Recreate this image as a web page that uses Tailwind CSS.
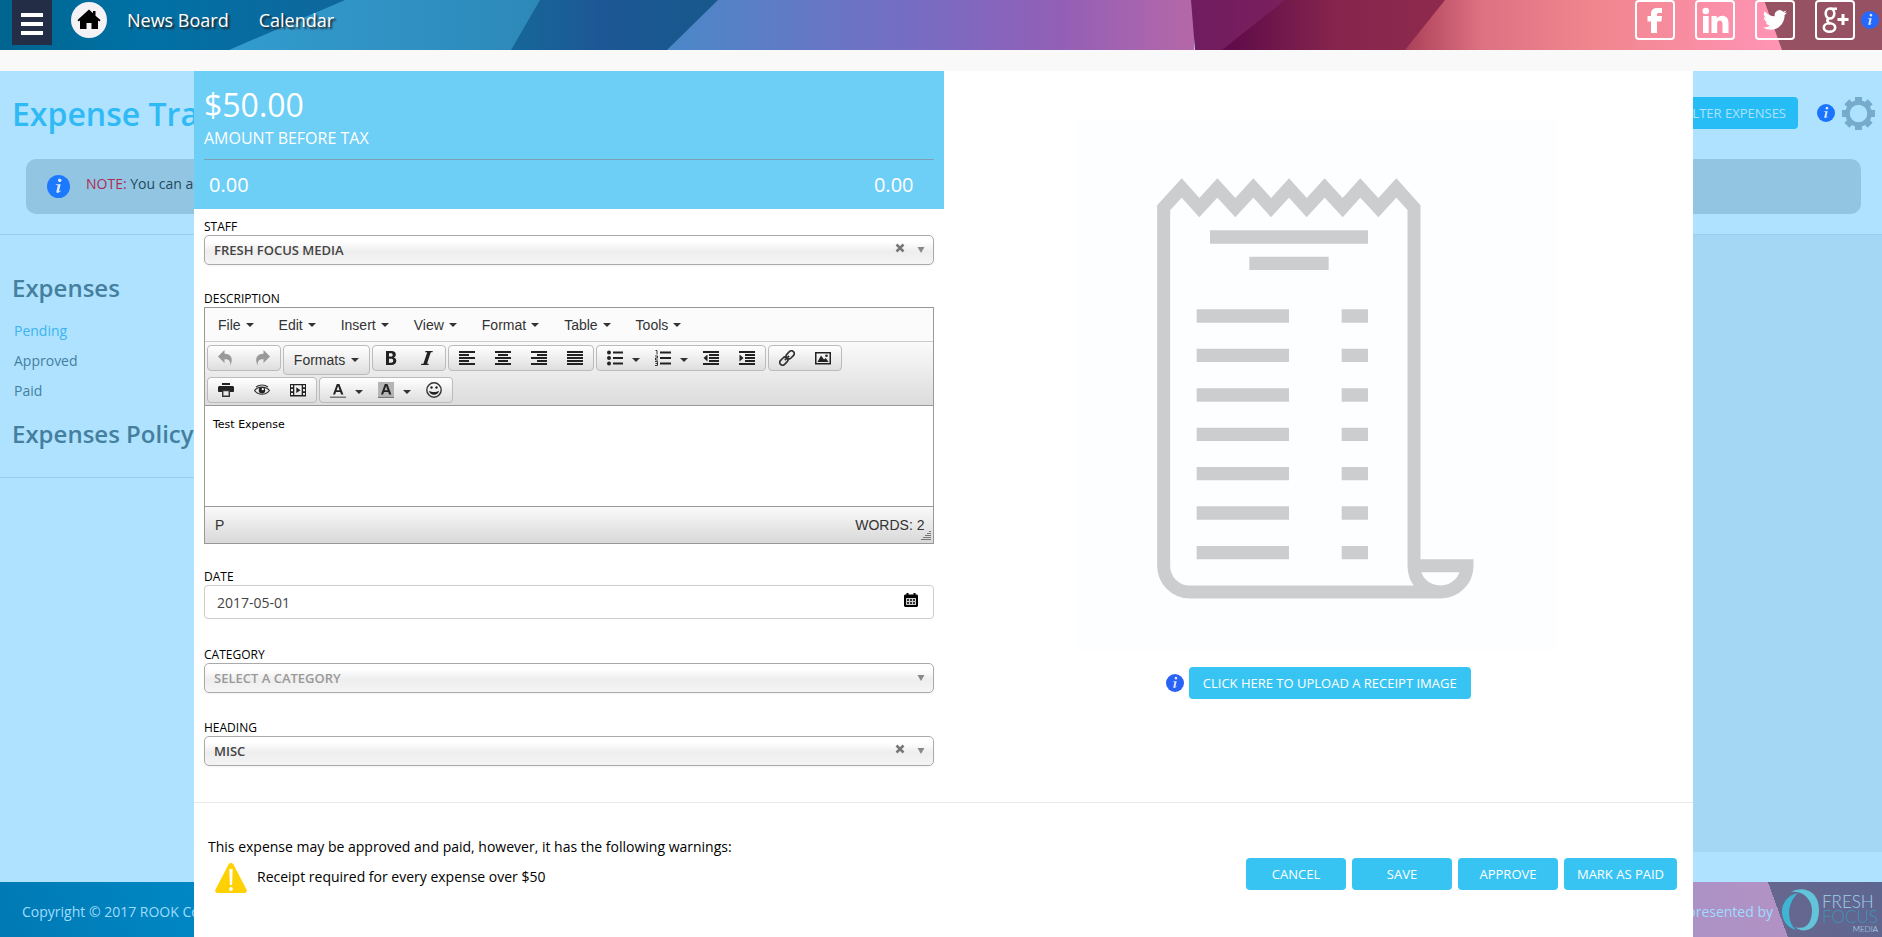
<!DOCTYPE html>
<html lang="en">
<head>
<meta charset="utf-8">
<title>Expense Tracker</title>
<script src="https://cdn.jsdelivr.net/npm/@tailwindcss/browser@4"></script>
</head>
<body class="font-['Open_Sans',sans-serif] text-sm text-black">

<svg class="hidden" aria-hidden="true">
  <symbol id="caret" viewBox="0 0 8 4"><path d="M0 0h8L4 4z"/></symbol>
  <symbol id="info" viewBox="0 0 20 20"><circle cx="10" cy="10" r="10"/><path fill="#fff" fill-opacity=".85" d="M9.6 4.2a1.5 1.5 0 1 1 2.4 1.6 1.5 1.5 0 0 1-2.4-1.6zM7.6 8h4.3l-1.4 5.6c-.2.8.4.6 1.3-.1l.3.5c-1.5 1.6-4.4 2.600-3.900.2l1.100-4.600c.2-.7-.2-.8-1.700-.9z"/></symbol>
  <symbol id="undo" viewBox="0 0 16 16"><path d="M6.500 0v3.800C12.500 3.800 16 8 12.300 15.500 12.600 10.500 10.500 9.200 6.500 9.300V13L0 6.500z"/></symbol>
  <symbol id="redo" viewBox="0 0 16 16"><path d="M9.500 0v3.800C3.500 3.800 0 8 3.700 15.500 3.400 10.500 5.500 9.200 9.500 9.300V13L16 6.500z"/></symbol>
  <symbol id="bold" viewBox="0 0 16 16"><path fill-rule="evenodd" d="M3 1h5.500c3 0 4.300 1.400 4.300 3.500 0 1.500-.8 2.500-2 3 1.600.4 2.500 1.600 2.500 3.300 0 2.600-1.800 4.200-4.800 4.200H3zM6 3.300v3.300h1.800c1.300 0 1.900-.6 1.900-1.700s-.6-1.600-1.900-1.600zM6 8.800v3.900h2.100c1.400 0 2.100-.7 2.100-2s-.7-1.900-2.100-1.900z"/></symbol>
  <symbol id="italic" viewBox="0 0 16 16"><path d="M6.500 1h7.300l-.3 1.200h-1.700L8 13.800h1.800L9.400 15H2l.4-1.200h2L8.200 2.200H6.100z"/></symbol>
  <symbol id="left" viewBox="0 0 16 16"><path d="M0 1h16v2H0zM0 4h10v2H0zM0 7h16v2H0zM0 10h10v2H0zM0 13h16v2H0z"/></symbol>
  <symbol id="center" viewBox="0 0 16 16"><path d="M0 1h16v2H0zM3 4h10v2H3zM0 7h16v2H0zM3 10h10v2H3zM0 13h16v2H0z"/></symbol>
  <symbol id="right" viewBox="0 0 16 16"><path d="M0 1h16v2H0zM6 4h10v2H6zM0 7h16v2H0zM6 10h10v2H6zM0 13h16v2H0z"/></symbol>
  <symbol id="justify" viewBox="0 0 16 16"><path d="M0 1h16v2H0zM0 4h16v2H0zM0 7h16v2H0zM0 10h16v2H0zM0 13h16v2H0z"/></symbol>
  <symbol id="bullets" viewBox="0 0 16 16"><circle cx="2" cy="2.500" r="2"/><circle cx="2" cy="8" r="2"/><circle cx="2" cy="13.500" r="2"/><path d="M6 1.500h10v2H6zM6 7h10v2H6zM6 12.500h10v2H6z"/></symbol>
  <symbol id="numbers" viewBox="0 0 16 16"><path d="M5 1.500h11v2H5zM5 7h11v2H5zM5 12.500h11v2H5z"/><path fill="none" stroke="#333" d="M.5.500H2V4.500M0 6h2.500v2H.5v2H3M0 11.500h2.500v4H0M.5 13.500h2"/></symbol>
  <symbol id="outdent" viewBox="0 0 16 16"><path d="M0 1h16v2H0zM6 4h10v2H6zM6 7h10v2H6zM6 10h10v2H6zM0 13h16v2H0zM4.500 4.500v7L.5 8z"/></symbol>
  <symbol id="indent" viewBox="0 0 16 16"><path d="M0 1h16v2H0zM6 4h10v2H6zM6 7h10v2H6zM6 10h10v2H6zM0 13h16v2H0zM.5 4.500v7l4-3.500z"/></symbol>
  <symbol id="link" viewBox="0 0 16 16"><g fill="none" stroke="#333" stroke-width="1.700" transform="rotate(-45 8 8)"><rect x="-1" y="5.200" width="9" height="5.600" rx="2.800"/><rect x="8" y="5.200" width="9" height="5.600" rx="2.800"/><path d="M5 8h6"/></g></symbol>
  <symbol id="image" viewBox="0 0 16 16"><path fill-rule="evenodd" d="M0 2h16v12.500H0zM1.500 3.500V13h13V3.500z"/><path d="M2.500 12l3.500-6.500 3 4 1.800-1.500 2.700 4z"/><circle cx="11.500" cy="5.800" r="1.300"/></symbol>
  <symbol id="print" viewBox="0 0 16 16"><path d="M4 1h8v2H4zM1 4h14l1 1v4.500l-.8.500H12V8H4v2H.8L0 9.500V5z"/><path fill="none" stroke="#333" stroke-width="1.400" d="M4.700 8.500h6.600v5.800H4.700z"/></symbol>
  <symbol id="eye" viewBox="0 0 16 16"><path fill="none" stroke="#333" stroke-width="1.200" d="M.6 8.500C4 4 12 4 15.400 8.500 12 13.500 4 13.500.6 8.500zM2 5C5.500 2.600 10.500 2.600 14 5"/><circle cx="8" cy="8.300" r="3.200"/><circle cx="8.800" cy="7.200" r="1.100" fill="#fff"/></symbol>
  <symbol id="film" viewBox="0 0 16 16"><path fill-rule="evenodd" d="M0 2h16v12.500H0zM1 3.300v1.900h2V3.300zm0 3.700v2.200h2V7zm0 3.900v2.200h2v-2.200zM13 3.300v1.900h2V3.300zM13 7v2.200h2V7zm0 3.900v2.200h2v-2.200zM4.300 3.300v9.800h7.400V3.300zM6.300 5.300 10.500 8.200 6.300 11z"/></symbol>
  <symbol id="forecolor" viewBox="0 0 16 16"><path fill="#777" d="M0 14.500h16V16H0z"/><path fill-rule="evenodd" d="M6.800 2h2.600l4 10.500h-2.300l-.9-2.500H6l-.9 2.500H3zM6.600 8.200h3L8.100 4.100z"/></symbol>
  <symbol id="backcolor" viewBox="0 0 16 16"><path fill="#b5b5b5" d="M0 0h16v14H0z"/><path fill="#777" d="M0 14.500h16V16H0z"/><path fill-rule="evenodd" d="M6.800 2h2.600l4 10.500h-2.300l-.9-2.500H6l-.9 2.500H3zM6.600 8.200h3L8.100 4.100z"/></symbol>
  <symbol id="smile" viewBox="0 0 16 16"><circle cx="8" cy="8" r="7.200" fill="none" stroke="#333" stroke-width="1.400"/><circle cx="5.500" cy="5.500" r="1.200"/><circle cx="10.500" cy="5.500" r="1.200"/><path d="M3 8.800c2.500 1.700 7.500 1.700 10 0-.6 5.200-9.400 5.200-10 0z"/></symbol>
  <symbol id="cross" viewBox="0 0 10 10"><path d="M1.500 1.500l7 7M8.500 1.500l-7 7" stroke="#777" stroke-width="2.500"/></symbol>
</svg>

<div class="relative flex min-h-screen flex-col overflow-hidden bg-[#aee2ff]">

  <!-- Top navigation -->
  <header class="relative flex h-[50px] items-start overflow-hidden">
    <svg class="absolute inset-0 h-full w-full" viewBox="0 0 1882 50" preserveAspectRatio="none" aria-hidden="true">
      <defs>
        <linearGradient id="g1"><stop offset="0" stop-color="#00658f"/><stop offset=".4" stop-color="#0071a5"/><stop offset="1" stop-color="#10679c"/></linearGradient>
        <linearGradient id="g2"><stop offset="0" stop-color="#329ccf"/><stop offset="1" stop-color="#2d88b8"/></linearGradient>
        <linearGradient id="g3"><stop offset="0" stop-color="#16679a"/><stop offset=".45" stop-color="#1d5795"/><stop offset="1" stop-color="#17588b"/></linearGradient>
        <linearGradient id="g4"><stop offset="0" stop-color="#4a88c8"/><stop offset=".45" stop-color="#756dc4"/><stop offset=".75" stop-color="#935fb6"/><stop offset="1" stop-color="#b568a8"/></linearGradient>
        <linearGradient id="g5"><stop offset="0" stop-color="#6f1c60"/><stop offset="1" stop-color="#7c1f5c"/></linearGradient>
        <linearGradient id="g6"><stop offset="0" stop-color="#5c0a49"/><stop offset=".5" stop-color="#86254d"/><stop offset="1" stop-color="#8f2a4c"/></linearGradient>
        <linearGradient id="g7"><stop offset="0" stop-color="#aa4058"/><stop offset=".2" stop-color="#de7182"/><stop offset=".5" stop-color="#f1868e"/><stop offset="1" stop-color="#ff94b6"/></linearGradient>
      </defs>
      <path fill="url(#g1)" d="M0 0h350v50H0z"/>
      <path fill="url(#g2)" d="M345 0h200v50H229z"/>
      <path fill="url(#g3)" d="M540 0h180v50H511z"/>
      <path fill="url(#g4)" d="M718 0h476v50H667z"/>
      <path fill="url(#g5)" d="M1191 0h98v50h-94z"/>
      <path fill="url(#g6)" d="M1285 0h165v50h-228z"/>
      <path fill="url(#g7)" d="M1445 0h340v50h-380z"/>
      <path fill="#965163" d="M1764 0h118v50h-100z"/>
    </svg>
    <div class="relative flex w-full items-start pl-3">
      <button type="button" aria-label="Menu" class="flex h-[45px] w-10 flex-col items-center justify-center gap-[5px] bg-[#232d45] pt-0.5">
        <span class="h-1 w-[22px] bg-white"></span><span class="h-1 w-[22px] bg-white"></span><span class="h-1 w-[22px] bg-white"></span>
      </button>
      <a href="#" aria-label="Home" class="mt-0.5 ml-[19px] flex size-9 items-center justify-center rounded-full bg-[#f4f2f4]">
        <svg class="size-6" viewBox="0 0 24 24"><path d="M12 1.500l4 3.800V3h2.500v4.700L23.500 12l-1 1.500-1.500-1V21h-6.500v-6h-5v6H3v-8.500l-1.500 1L.5 12z"/></svg>
      </a>
      <nav class="ml-5 flex gap-[30px] text-lg leading-10 text-white [text-shadow:2px_2px_2px_#222]">
        <a href="#">News Board</a><a href="#">Calendar</a>
      </nav>
      <div class="ml-auto flex gap-5">
        <a href="#" aria-label="Facebook" class="size-10 rounded border-2 border-white"><svg viewBox="0 0 36 36" fill="#fff"><path d="M14 31V19.500h-3.500V14H14v-2.500C14 8 16.500 6 20.500 6H25v5h-3c-1.500 0-2 .6-2 1.500V14h5l-.6 5.500H20V31z"/></svg></a>
        <a href="#" aria-label="LinkedIn" class="size-10 rounded border-2 border-white"><svg viewBox="0 0 36 36" fill="#fff"><circle cx="8.800" cy="9" r="3.300"/><path d="M6 14h5.700v17H6zM14.500 14h5.300v2.500c3-4.500 11.700-4 11.700 4V31h-6v-9c0-4.500-5.300-4.500-5.300-.5V31h-5.700z"/></svg></a>
        <a href="#" aria-label="Twitter" class="size-10 rounded border-2 border-white"><svg viewBox="0 0 36 36"><path fill="#fff" transform="translate(6 6)" d="M23.950 4.570a10 10 0 0 1-2.820.77 4.960 4.960 0 0 0 2.160-2.720c-.95.550-2 .95-3.130 1.180a4.920 4.920 0 0 0-8.390 4.480C7.690 8.100 4.070 6.130 1.640 3.160a4.920 4.920 0 0 0 1.520 6.570 4.900 4.900 0 0 1-2.230-.61v.06a4.920 4.920 0 0 0 3.950 4.830 5 5 0 0 1-2.210.080 4.940 4.940 0 0 0 4.600 3.420A9.870 9.870 0 0 1 0 19.540a14 14 0 0 0 7.550 2.210c9.050 0 14-7.500 14-13.980l-.02-.64a9.940 9.940 0 0 0 2.420-2.560z"/></svg></a>
        <a href="#" aria-label="Google Plus" class="size-10 rounded border-2 border-white"><svg viewBox="0 0 36 36"><g fill="none" stroke="#fff" stroke-width="2.600"><ellipse cx="13" cy="11.500" rx="4.300" ry="5"/><ellipse cx="12.500" cy="25.500" rx="5.700" ry="4.300"/><path d="M13.500 6.800H20M12 16.500c-3 2-1.500 3.500 1.500 5"/><path stroke-width="3" d="M20.500 17.500h11M26 12v11"/></g></svg></a>
        <svg class="mt-[11px] -ml-[14px] size-[18px] fill-[#2468ff]" aria-hidden="true"><use href="#info"/></svg>
        <span class="-ml-[17px]"></span>
      </div>
    </div>
  </header>
  <div class="h-[21px] bg-[#faf9fa]"></div>

  <!-- Page behind the dialog -->
  <div class="flex h-[88px] items-center justify-between pr-[7px] pl-3">
    <h1 class="pb-0.5 text-[32px] font-semibold text-[#2fbaf5]">Expense Tracker</h1>
    <div class="flex items-center pb-1">
      <button type="button" class="h-8 rounded bg-[#26bdf7] px-3 text-[13px] text-[#aee2ff]">FILTER EXPENSES</button>
      <svg class="ml-[19px] size-[18px] fill-[#1b74ff]" aria-hidden="true"><use href="#info"/></svg>
      <button type="button" aria-label="Settings" class="ml-[7px]"><svg class="size-[33px]" viewBox="0 0 33 33"><g fill="#76abcb"><path d="M13 0h7v6h-7zM13 27h7v6h-7zM0 13h6v7H0zM27 13h6v7h-6z"/><path transform="rotate(45 16.500 16.500)" d="M13 0h7v6h-7zM13 27h7v6h-7zM0 13h6v7H0zM27 13h6v7h-6z"/></g><circle cx="16.500" cy="16.500" r="11" fill="none" stroke="#76abcb" stroke-width="4.500"/></svg></button>
    </div>
  </div>
  <div class="mr-[21px] mb-5 ml-[26px] flex h-[55px] items-center gap-4 rounded-[10px] bg-[#92c5e1] px-[21px]">
    <svg class="size-[23px] fill-[#1b78ff]" aria-hidden="true"><use href="#info"/></svg>
    <p class="pb-1.5 text-[#1c4a60]"><span class="text-[#b02a52]">NOTE:</span> You can add expenses here</p>
  </div>
  <div class="flex h-[618px] border-t border-[#96cdf0]">
    <aside class="w-[300px] shrink-0 px-3 text-[#457f9e]">
      <h2 class="mt-[35px] text-2xl leading-9 font-semibold whitespace-nowrap">Expenses</h2>
      <ul class="mt-[10px] pl-0.5 leading-[30px]">
        <li><a href="#" class="text-[#3db4ee]">Pending</a></li>
        <li><a href="#">Approved</a></li>
        <li><a href="#">Paid</a></li>
      </ul>
      <h2 class="mt-[10px] text-2xl leading-9 font-semibold whitespace-nowrap">Expenses Policy</h2>
      <hr class="-mx-3 mt-[25px] border-[#96cdf0]">
    </aside>
    <main class="flex-1 bg-[#a4d7f3]"></main>
  </div>
  <footer class="mt-auto flex h-[55px] items-center justify-between bg-[linear-gradient(70deg,#0079b4_0%,#0089c5_12%,#7f8fc6_60%,#b292c5_94%,#66678f_94%,#5d6690_100%)] pr-px pl-[22px] text-[#9fdcff]">
    <p class="pt-1">Copyright © 2017 ROOK Connect</p>
    <div class="flex items-center gap-2">
      <span class="pt-1">Proudly presented by</span>
      <svg class="h-[50px] w-[100px]" viewBox="0 0 100 50" role="img" aria-label="Fresh Focus Media">
        <path fill="#3fb4d3" d="M17 8C-4 12-4 40 15 45 5 36 6 18 17 8z"/>
        <path fill="#62c3d9" d="M10 7C20 1 38 4 38 25S22 49 14 42C27 46 31 35 31 25S22 5 10 7z"/>
        <g font-family="Lato, sans-serif" font-weight="300"><text x="41" y="23" font-size="17" fill="#9fd0ee">FRESH</text><text x="41" y="38" font-size="17" fill="#3f93b4">FOCUS</text><text x="97" y="47" text-anchor="end" font-size="8" fill="#b9e2f7">MEDIA</text></g>
      </svg>
    </div>
  </footer>

  <!-- Expense dialog -->
  <div role="dialog" aria-label="Expense" class="absolute top-[71px] right-[189px] bottom-0 left-[194px] bg-white">
    <div class="grid grid-cols-2">
      <section>
        <div class="h-[138px] bg-[#6dcef6] px-[10px] pt-[10px] text-white">
          <p class="text-[32px] leading-[48px]">$50.00</p>
          <p class="h-[30px] pt-px text-base leading-4">AMOUNT BEFORE TAX</p>
          <div class="flex justify-between border-t border-[#7f9fb2] pr-5 pl-[5px] text-xl leading-[50px]"><span>0.00</span><span>0.00</span></div>
        </div>
        <form class="px-[10px] pt-[10px]">
          <label for="staff" class="block text-xs leading-4">STAFF</label>
          <div class="flex h-[30px] items-center rounded-[5px] border border-[#aaa] bg-linear-to-b from-white from-20% via-[#eeeeee] via-55% to-[#f4f4f4] pr-2 pl-[9px] shadow-xs">
            <select id="staff" class="h-full flex-1 appearance-none bg-transparent text-[13px] font-semibold text-[#444] outline-none"><option>FRESH FOCUS MEDIA</option></select>
            <button type="button" aria-label="Clear staff" class="mr-3 pb-1"><svg class="size-[10px]"><use href="#cross"/></svg></button>
            <svg class="h-[6px] w-[8px] fill-[#888]" viewBox="0 0 8 6"><path d="M.5 0h7L4 6z"/></svg>
          </div>

          <span id="desc-label" class="mt-[26px] block text-xs leading-4">DESCRIPTION</span>
          <div class="border border-[#999] font-['Liberation_Sans',sans-serif] text-[#333]">
            <div class="flex h-[34px] items-center border-b border-[#ccc] bg-[#fbfbfb] pl-px">
              <button type="button" class="flex items-center gap-[5px] pr-[13px] pl-3">File <svg class="h-1 w-2 fill-[#333]"><use href="#caret"/></svg></button>
              <button type="button" class="flex items-center gap-[5px] pr-[13px] pl-3">Edit <svg class="h-1 w-2 fill-[#333]"><use href="#caret"/></svg></button>
              <button type="button" class="flex items-center gap-[5px] pr-[13px] pl-3">Insert <svg class="h-1 w-2 fill-[#333]"><use href="#caret"/></svg></button>
              <button type="button" class="flex items-center gap-[5px] pr-[13px] pl-3">View <svg class="h-1 w-2 fill-[#333]"><use href="#caret"/></svg></button>
              <button type="button" class="flex items-center gap-[5px] pr-[13px] pl-3">Format <svg class="h-1 w-2 fill-[#333]"><use href="#caret"/></svg></button>
              <button type="button" class="flex items-center gap-[5px] pr-[13px] pl-3">Table <svg class="h-1 w-2 fill-[#333]"><use href="#caret"/></svg></button>
              <button type="button" class="flex items-center gap-[5px] pr-[13px] pl-3">Tools <svg class="h-1 w-2 fill-[#333]"><use href="#caret"/></svg></button>
            </div>
            <div class="flex flex-col gap-0.5 border-b border-[#999] bg-linear-to-b from-[#fafafa] to-[#dcdcdc] px-0.5 pt-[3px] pb-0.5">
              <div class="flex items-start gap-0.5">
                <div class="flex h-[26px] rounded-sm border border-[#bbb] bg-linear-to-b from-white to-[#dedede]">
                  <button type="button" aria-label="Undo" class="flex w-9 items-center justify-center"><svg class="size-4 fill-[#999]"><use href="#undo"/></svg></button>
                  <button type="button" aria-label="Redo" class="flex w-9 items-center justify-center"><svg class="size-4 fill-[#999]"><use href="#redo"/></svg></button>
                </div>
                <button type="button" class="flex h-[30px] w-[87px] items-center justify-center gap-[6px] rounded-sm border border-[#bbb] bg-linear-to-b from-white to-[#dedede]">Formats <svg class="h-1 w-2 fill-[#333]"><use href="#caret"/></svg></button>
                <div class="flex h-[26px] rounded-sm border border-[#bbb] bg-linear-to-b from-white to-[#dedede]">
                  <button type="button" aria-label="Bold" class="flex w-9 items-center justify-center"><svg class="size-4 fill-[#222]"><use href="#bold"/></svg></button>
                  <button type="button" aria-label="Italic" class="flex w-9 items-center justify-center"><svg class="size-4 fill-[#222]"><use href="#italic"/></svg></button>
                </div>
                <div class="flex h-[26px] rounded-sm border border-[#bbb] bg-linear-to-b from-white to-[#dedede]">
                  <button type="button" aria-label="Align left" class="flex w-9 items-center justify-center"><svg class="size-4 fill-[#222]"><use href="#left"/></svg></button>
                  <button type="button" aria-label="Align center" class="flex w-9 items-center justify-center"><svg class="size-4 fill-[#222]"><use href="#center"/></svg></button>
                  <button type="button" aria-label="Align right" class="flex w-9 items-center justify-center"><svg class="size-4 fill-[#222]"><use href="#right"/></svg></button>
                  <button type="button" aria-label="Justify" class="flex w-9 items-center justify-center"><svg class="size-4 fill-[#222]"><use href="#justify"/></svg></button>
                </div>
                <div class="flex h-[26px] rounded-sm border border-[#bbb] bg-linear-to-b from-white to-[#dedede]">
                  <button type="button" aria-label="Bullet list" class="flex w-12 items-center gap-[9px] pl-[10px]"><svg class="size-4 fill-[#222]"><use href="#bullets"/></svg><svg class="mt-1 h-1 w-2 fill-[#333]"><use href="#caret"/></svg></button>
                  <button type="button" aria-label="Numbered list" class="flex w-12 items-center gap-[9px] pl-[10px]"><svg class="size-4 fill-[#222]"><use href="#numbers"/></svg><svg class="mt-1 h-1 w-2 fill-[#333]"><use href="#caret"/></svg></button>
                  <button type="button" aria-label="Outdent" class="flex w-9 items-center justify-center"><svg class="size-4 fill-[#222]"><use href="#outdent"/></svg></button>
                  <button type="button" aria-label="Indent" class="flex w-9 items-center justify-center"><svg class="size-4 fill-[#222]"><use href="#indent"/></svg></button>
                </div>
                <div class="flex h-[26px] rounded-sm border border-[#bbb] bg-linear-to-b from-white to-[#dedede]">
                  <button type="button" aria-label="Link" class="flex w-9 items-center justify-center"><svg class="size-4"><use href="#link"/></svg></button>
                  <button type="button" aria-label="Image" class="flex w-9 items-center justify-center"><svg class="size-4 fill-[#222]"><use href="#image"/></svg></button>
                </div>
              </div>
              <div class="flex items-start gap-0.5">
                <div class="flex h-[26px] rounded-sm border border-[#bbb] bg-linear-to-b from-white to-[#dedede]">
                  <button type="button" aria-label="Print" class="flex w-9 items-center justify-center"><svg class="size-4 fill-[#222]"><use href="#print"/></svg></button>
                  <button type="button" aria-label="Preview" class="flex w-9 items-center justify-center"><svg class="size-4 fill-[#222]"><use href="#eye"/></svg></button>
                  <button type="button" aria-label="Media" class="flex w-9 items-center justify-center"><svg class="size-4 fill-[#222]"><use href="#film"/></svg></button>
                </div>
                <div class="flex h-[26px] rounded-sm border border-[#bbb] bg-linear-to-b from-white to-[#dedede]">
                  <button type="button" aria-label="Text colour" class="flex w-12 items-center gap-[9px] pl-[10px]"><svg class="size-4 fill-[#222]"><use href="#forecolor"/></svg><svg class="mt-1 h-1 w-2 fill-[#333]"><use href="#caret"/></svg></button>
                  <button type="button" aria-label="Background colour" class="flex w-12 items-center gap-[9px] pl-[10px]"><svg class="size-4 fill-[#222]"><use href="#backcolor"/></svg><svg class="mt-1 h-1 w-2 fill-[#333]"><use href="#caret"/></svg></button>
                  <button type="button" aria-label="Emoticons" class="flex w-9 items-center justify-center"><svg class="size-4 fill-[#222]"><use href="#smile"/></svg></button>
                </div>
              </div>
            </div>
            <textarea aria-labelledby="desc-label" class="block h-[100px] w-full resize-none bg-white px-2 py-3 font-['DejaVu_Sans',sans-serif] text-[11px] leading-[14px] text-black outline-none">Test Expense</textarea>
            <div class="relative flex h-[37px] items-center justify-between border-t border-[#999] bg-linear-to-b from-[#fafafa] to-[#d8d8d8] pr-2 pl-[10px]">
              <span>P</span><span>WORDS: 2</span>
              <svg class="absolute right-0.5 bottom-0.5 size-[10px]" viewBox="0 0 10 10" fill="#777"><path d="M8 0h2v1H8zM6 2h4v1H6zM4 4h6v1H4zM2 6h8v1H2zM0 8h10v1H0z"/></svg>
            </div>
          </div>

          <label for="date" class="mt-[25px] block text-xs leading-4">DATE</label>
          <div class="flex h-[34px] items-center rounded border border-[#ccc] bg-white pr-[15px] pl-3">
            <input id="date" type="text" value="2017-05-01" class="h-full flex-1 bg-transparent text-sm text-[#444] outline-none">
            <button type="button" aria-label="Pick a date" class="pb-1"><svg class="size-[14px]" viewBox="0 0 14 14"><path d="M1 1.500h1.500V0h2v1.500h5V0h2v1.500H13l1 1V13l-1 1H1l-1-1V2.500z"/><path fill="#ccc" d="M2 5h10v7H2z"/><path fill="#333" d="M3 6h2v2H3zM6 6h2v2H6zM9 6h2v2H9zM3 9h2v2H3zM6 9h2v2H6zM9 9h2v2H9z"/></svg></button>
          </div>

          <label for="category" class="mt-7 block text-xs leading-4">CATEGORY</label>
          <div class="flex h-[30px] items-center rounded-[5px] border border-[#aaa] bg-linear-to-b from-white from-20% via-[#eeeeee] via-55% to-[#f4f4f4] pr-2 pl-[9px] shadow-xs">
            <select id="category" class="h-full flex-1 appearance-none bg-transparent text-[13px] font-semibold text-[#999] outline-none"><option>SELECT A CATEGORY</option></select>
            <svg class="h-[6px] w-[8px] fill-[#888]" viewBox="0 0 8 6"><path d="M.5 0h7L4 6z"/></svg>
          </div>

          <label for="heading" class="mt-[27px] block text-xs leading-4">HEADING</label>
          <div class="flex h-[30px] items-center rounded-[5px] border border-[#aaa] bg-linear-to-b from-white from-20% via-[#eeeeee] via-55% to-[#f4f4f4] pr-2 pl-[9px] shadow-xs">
            <select id="heading" class="h-full flex-1 appearance-none bg-transparent text-[13px] font-semibold text-[#444] outline-none"><option>MISC</option></select>
            <button type="button" aria-label="Clear heading" class="mr-3 pb-1"><svg class="size-[10px]"><use href="#cross"/></svg></button>
            <svg class="h-[6px] w-[8px] fill-[#888]" viewBox="0 0 8 6"><path d="M.5 0h7L4 6z"/></svg>
          </div>
        </form>
      </section>

      <section class="flex flex-col items-center pt-[49px]">
        <svg class="h-[530px] w-[480px] bg-[#fcfeff]" viewBox="1078 120 480 530" role="img" aria-label="Receipt">
          <g transform="translate(1100 140) scale(.333333)">
            <path fill="none" stroke="#cccdcf" stroke-width="39" d="M942 1277V203L889 144 835 203 781 144 728 203 674 144 620 203 567 144 513 203 460 144 406 203 352 144 298 203 245 144 191 203V1277C191 1320 225 1356 270 1356H1022C1065 1356 1101 1322 1101 1277H942C942 1322 975 1356 1022 1356"/>
            <path fill="#cccdcf" d="M330 271h474v40H330zM448 350h238v40H448zM290 508h277v40H290zM725 508h79v40h-79zM290 626h277v40H290zM725 626h79v40h-79zM290 745h277v40H290zM725 745h79v40h-79zM290 863h277v40H290zM725 863h79v40h-79zM290 981h277v40H290zM725 981h79v40h-79zM290 1099h277v40H290zM725 1099h79v40h-79zM290 1218h277v40H290zM725 1218h79v40h-79z"/>
          </g>
        </svg>
        <div class="mt-[17px] flex items-center gap-[5px]">
          <svg class="size-[18px] fill-[#2a62f5]" aria-hidden="true"><use href="#info"/></svg>
          <button type="button" class="h-8 rounded bg-[#38c4f3] px-[14px] text-[13px] text-white">CLICK HERE TO UPLOAD A RECEIPT IMAGE</button>
        </div>
      </section>
    </div>

    <div class="mt-9 flex items-end justify-between border-t border-[#e8e8e8] pr-4 pl-[14px]">
      <div class="pt-8">
        <p class="leading-6">This expense may be approved and paid, however, it has the following warnings:</p>
        <div class="mt-1 flex items-center gap-[10px] pl-[7px]">
          <svg class="h-[30px] w-8" viewBox="0 0 32 30" aria-hidden="true"><path fill="#fed105" d="M13.500 1.500c1-2 4-2 5 0l13 25c.9 1.700 0 3.500-2 3.500h-27c-2 0-2.900-1.800-2-3.500z"/><path fill="#fff" d="M14.300 6h3.400l-.6 16h-2.200z"/><circle cx="16" cy="26" r="1.900" fill="#fff"/></svg>
          <p class="pb-0.5">Receipt required for every expense over $50</p>
        </div>
      </div>
      <div class="flex gap-1.5 pb-[3px] text-[13px] text-white">
        <button type="button" class="h-8 w-[100px] rounded bg-[#38c4f3]">CANCEL</button>
        <button type="button" class="h-8 w-[100px] rounded bg-[#38c4f3]">SAVE</button>
        <button type="button" class="h-8 w-[100px] rounded bg-[#38c4f3]">APPROVE</button>
        <button type="button" class="h-8 w-[113px] rounded bg-[#38c4f3]">MARK AS PAID</button>
      </div>
    </div>
  </div>
</div>
</body>
</html>
